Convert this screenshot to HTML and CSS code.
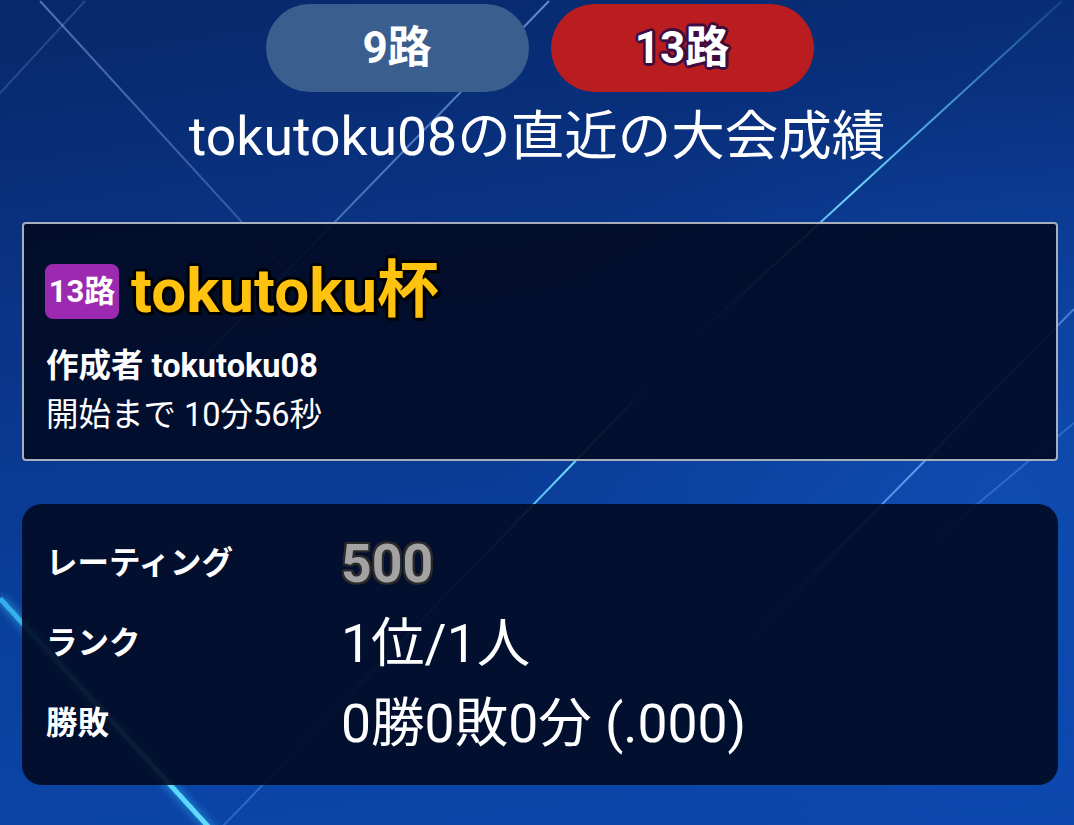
FILE: index.html
```html
<!DOCTYPE html>
<html lang="ja">
<head>
<meta charset="utf-8">
<title>tokutoku08の直近の大会成績</title>
<link rel="stylesheet" href="styles.css">
</head>
<body>
<div class="bg" aria-hidden="true">
  <div class="ray ray1"></div>
  <div class="ray ray2"></div>
  <div class="ray ray3"></div>
  <div class="ray ray4"></div>
  <div class="ray ray5"></div>
  <div class="ray ray6"></div>
  <div class="ray ray7"></div>
  <div class="ray ray8"></div>
</div>
<main class="page">
  <nav class="tabs">
    <button class="tab tab-off">9路</button>
    <button class="tab tab-on">13路</button>
  </nav>
  <h1 class="title">tokutoku08の直近の大会成績</h1>

  <section class="card event">
    <div class="event-head">
      <span class="badge">13路</span>
      <span class="event-name">tokutoku杯</span>
    </div>
    <div class="event-owner">作成者 tokutoku08</div>
    <div class="event-time">開始まで 10分56秒</div>
  </section>

  <section class="card stats">
    <div class="label">レーティング</div>
    <div class="value rating">500</div>
    <div class="label">ランク</div>
    <div class="value">1位/1人</div>
    <div class="label">勝敗</div>
    <div class="value">0勝0敗0分 (.000)</div>
  </section>
</main>
</body>
</html>
```

FILE: styles.css
```css
html, body {
  margin: 0;
  padding: 0;
}
body {
  width: 1074px;
  height: 825px;
  overflow: hidden;
  position: relative;
  font-family: Roboto, "Noto Sans CJK JP", sans-serif;
  color: #ffffff;
  background:
    radial-gradient(ellipse 500px 400px at 1000px 480px, rgba(20, 90, 200, 0.45), rgba(20, 90, 200, 0) 100%),
    linear-gradient(172deg, #07286a 0%, #0a3588 35%, #0a41a0 70%, #0b47ac 100%);
}

.bg {
  position: absolute;
  inset: 0;
  overflow: hidden;
  z-index: 0;
}
.ray {
  position: absolute;
  height: 2px;
  transform-origin: 0 50%;
}
.ray1 {
  left: 40px; top: 0;
  width: 390px;
  transform: rotate(47.6deg);
  background: linear-gradient(90deg, rgba(170,200,255,0.45), rgba(170,200,255,0.2));
}
.ray2 {
  left: 85px; top: 0;
  width: 126px;
  transform: rotate(132.7deg);
  background: rgba(150,185,255,0.22);
}
.ray3 {
  left: 549px; top: 0;
  width: 500px;
  transform: rotate(134.1deg);
  background: linear-gradient(90deg, rgba(140,190,255,0.65), rgba(140,190,255,0.3));
}
.ray4 {
  left: 1062px; top: 0;
  width: 490px;
  transform: rotate(137.5deg);
  background: linear-gradient(90deg, rgba(90,190,255,0.15), rgba(110,215,255,1) 58%, rgba(90,190,255,0.3));
}
.ray5 {
  left: 0; top: 596px;
  width: 330px;
  height: 5px;
  transform: rotate(47.6deg);
  background: linear-gradient(90deg, rgba(60,200,255,0.8), rgba(100,225,255,1));
  box-shadow: 0 0 10px rgba(60,200,255,0.8);
}
.ray6 {
  left: 645px; top: 388px;
  width: 620px;
  transform: rotate(134deg);
  background: linear-gradient(90deg, rgba(90,200,255,0.3), rgba(110,220,255,1) 18%, rgba(90,200,255,0.5) 40%, rgba(120,180,255,0.3));
}
.ray7 {
  left: 1074px; top: 308px;
  width: 460px;
  transform: rotate(134.5deg);
  background: linear-gradient(90deg, rgba(120,180,255,0.5), rgba(120,185,255,0.75) 50%, rgba(120,180,255,0.2));
}
.ray8 {
  left: 1074px; top: 422px;
  width: 180px;
  transform: rotate(140deg);
  background: rgba(120,180,255,0.3);
}

.page {
  position: relative;
  z-index: 1;
  display: flex;
  flex-direction: column;
}

.tabs {
  display: flex;
  justify-content: center;
  gap: 22px;
  padding-top: 4px;
  padding-left: 5px;
}
.tab {
  width: 263px;
  height: 88px;
  border: none;
  border-radius: 44px;
  font-family: Roboto, "Noto Sans CJK JP", sans-serif;
  font-weight: 700;
  font-size: 44px;
  color: #ffffff;
  padding: 0;
  line-height: 88px;
}
.tab-off {
  background: #3a5f8f;
}
.tab-on {
  background: #b91d1f;
  text-shadow:
    2px 0 0 #3d0d3f, -2px 0 0 #3d0d3f, 0 2px 0 #3d0d3f, 0 -2px 0 #3d0d3f,
    2px 2px 0 #3d0d3f, -2px -2px 0 #3d0d3f, 2px -2px 0 #3d0d3f, -2px 2px 0 #3d0d3f,
    3px 0 0 #3d0d3f, -3px 0 0 #3d0d3f, 0 3px 0 #3d0d3f, 0 -3px 0 #3d0d3f;
}

.title {
  margin: 15px 0 0;
  font-size: 53.5px;
  font-weight: 400;
  line-height: 60px;
  text-align: center;
}

.card {
  margin: 55px 16px 0 22px;
  background: rgba(1, 10, 34, 0.9);
}
.event {
  border: 2px solid #a7afbd;
  border-radius: 4px;
  padding: 34px 21px 19px 21px;
}
.event-head {
  display: flex;
  align-items: center;
  gap: 12px;
  height: 66px;
}
.badge {
  width: 74px;
  height: 55px;
  border-radius: 8px;
  background: #9c2ab0;
  display: flex;
  align-items: center;
  justify-content: center;
  font-weight: 700;
  font-size: 31px;
  line-height: 1;
}
.event-name {
  font-size: 62px;
  font-weight: 700;
  line-height: 66px;
  color: #ffc20e;
  text-shadow:
    3px 0 0 #000, -3px 0 0 #000, 0 3px 0 #000, 0 -3px 0 #000,
    2px 2px 0 #000, -2px -2px 0 #000, 2px -2px 0 #000, -2px 2px 0 #000,
    3px 3px 1px #000;
}
.event-owner {
  margin-top: 18px;
  font-size: 32.5px;
  font-weight: 700;
  line-height: 49px;
  padding-left: 1px;
}
.event-time {
  font-size: 32.5px;
  line-height: 49px;
  padding-left: 1px;
}

.stats {
  margin-top: 43px;
  border-radius: 20px;
  padding: 20px 24px 21px 24px;
  display: grid;
  grid-template-columns: 295px 1fr;
  grid-auto-rows: 80px;
  align-items: center;
}
.label {
  font-size: 31.5px;
  font-weight: 700;
  line-height: 40px;
}
.value {
  font-size: 53.5px;
  line-height: 80px;
  white-space: nowrap;
}
.rating {
  font-weight: 700;
  color: #a3a3a3;
  text-shadow:
    2px 0 0 #2a2a2a, -2px 0 0 #2a2a2a, 0 2px 0 #2a2a2a, 0 -2px 0 #2a2a2a,
    2px 2px 0 #2a2a2a, -2px -2px 0 #2a2a2a, 2px -2px 0 #2a2a2a, -2px 2px 0 #2a2a2a;
}
```
